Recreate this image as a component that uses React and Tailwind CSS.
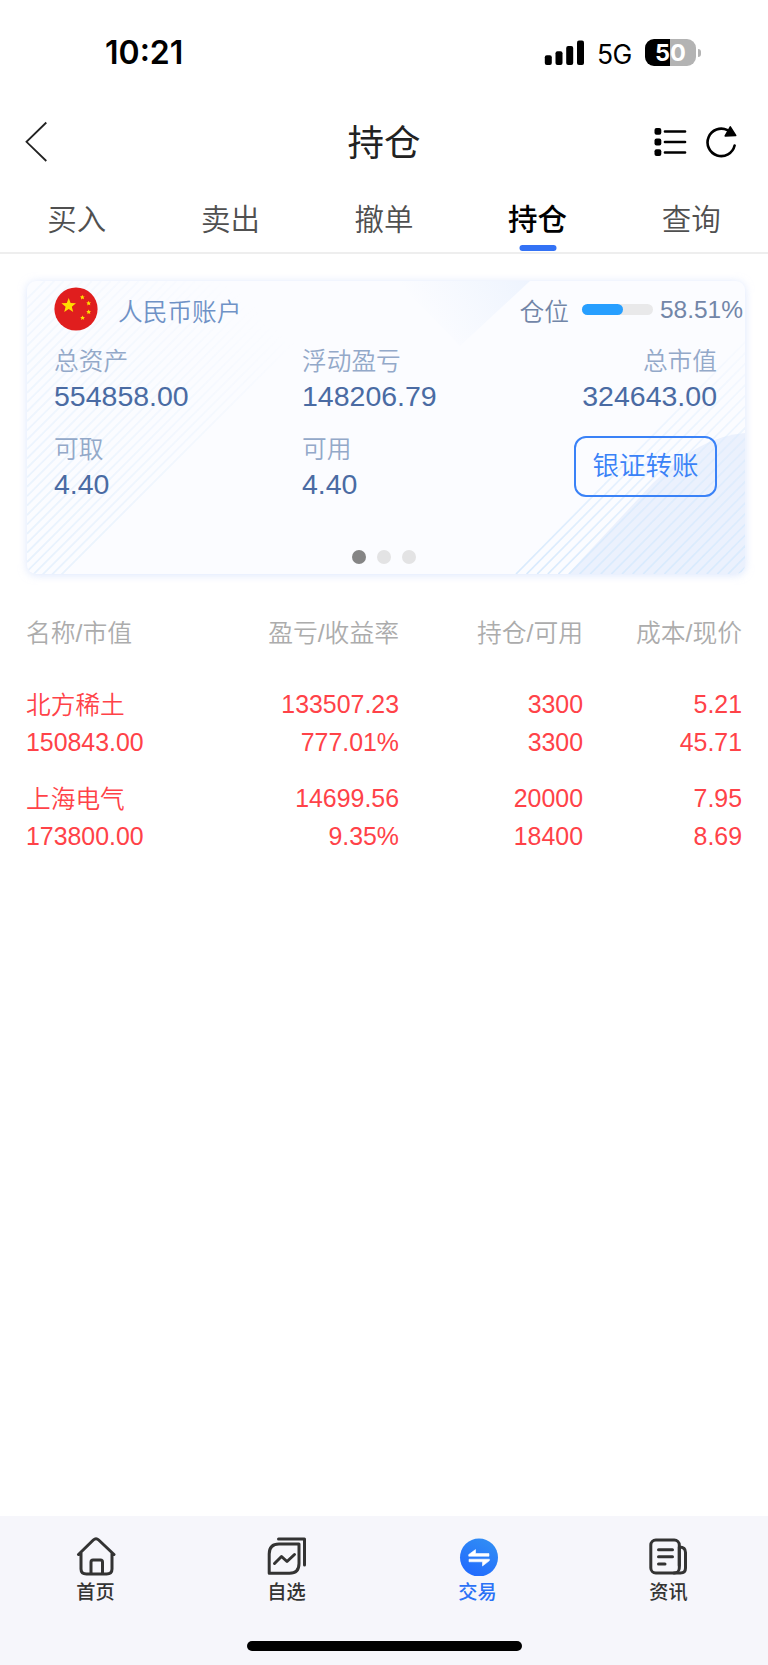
const tabs = ["买入", "卖出", "撤单", "持仓", "查询"];

const headers = ["名称/市值", "盈亏/收益率", "持仓/可用", "成本/现价"];

const positions = [
  {
    name: "北方稀土",
    value: "150843.00",
    profit: "133507.23",
    rate: "777.01%",
    held: "3300",
    usable: "3300",
    cost: "5.21",
    price: "45.71",
  },
  {
    name: "上海电气",
    value: "173800.00",
    profit: "14699.56",
    rate: "9.35%",
    held: "20000",
    usable: "18400",
    cost: "7.95",
    price: "8.69",
  },
];

const leftStripes = Array.from({ length: 34 }, (_, i) => 328 - i * 9.4);
const rightStripes = Array.from({ length: 24 }, (_, i) => 489 + i * 10.6);

function StatusBar() {
  return (
    <div className="flex h-[105px] items-center justify-between pl-[105px] pr-[67px]">
      <span className="font-['Inter'] text-[32px] font-semibold">10:21</span>
      <div className="flex items-center">
        <svg className="mr-[13px] h-[26px] w-10" viewBox="0 0 40 26">
          <rect x="0.8" y="15.3" width="7" height="9.7" rx="2" />
          <rect x="11.5" y="11.3" width="7" height="13.7" rx="2" />
          <rect x="22.2" y="6" width="7" height="19" rx="2" />
          <rect x="33" y="0.5" width="7" height="24.5" rx="2" />
        </svg>
        <span className="mt-[3px] w-[48px] font-['Inter'] text-[26.5px] leading-none tracking-[-0.5px]">5G</span>
        <div className="flex h-[27px] w-[51px] items-center justify-center rounded-[9px] bg-linear-to-r from-black from-50% to-[#b3b3b3] to-50% font-['Inter'] text-[23.5px] font-bold leading-none text-white">
          50
        </div>
        <div className="ml-0.5 h-2 w-[3px] rounded-r-full bg-[#b3b3b3]" />
      </div>
    </div>
  );
}

function Header() {
  return (
    <header className="flex h-[75px] items-center justify-between pl-[25px] pr-[30px]">
      <svg className="mb-1 h-[42px] w-[85px]" viewBox="0 0 85 42" fill="none" stroke="#222" strokeWidth="1.8">
        <path d="M21.3 2.5 1.5 21.8 21.3 41" />
      </svg>
      <h1 className="ml-1 mt-1 text-[36.5px] font-normal text-[#222]">持仓</h1>
      <div className="mb-px flex items-center gap-[18px]">
        <svg className="h-[30px] w-[33px]" viewBox="0 0 33 30" fill="none" stroke="#000" strokeWidth="2.7" strokeLinecap="round">
          <g fill="#000" stroke="none">
            <rect x="0.5" y="1" width="6.8" height="6.8" rx="2" />
            <rect x="0.5" y="11.6" width="6.8" height="6.8" rx="2" />
            <rect x="0.5" y="22.2" width="6.8" height="6.8" rx="2" />
          </g>
          <path d="M11 4.5H31M11 15H31M11 25.5H31" />
        </svg>
        <svg className="h-8 w-[33px]" viewBox="0 0 33 32" fill="none" stroke="#000" strokeWidth="2.6" strokeLinecap="round">
          <path d="M22.5 4.2A13.7 13.7 0 1 0 29.600 19.5" />
          <path d="M25.300 0.9 30.700 9.5 20.200 9.9Z" fill="#000" strokeWidth="1.500" strokeLinejoin="round" />
        </svg>
      </div>
    </header>
  );
}

function FlagIcon() {
  return (
    <svg className="mb-1 h-[44px] w-[44px]" viewBox="0 0 44 44" fill="#fd0">
      <circle cx="22" cy="22" r="21.6" fill="#e01e1e" />
      <path d="M14.7 11 16.6 16.1 22 16.3 17.8 19.7 19.2 25 14.7 22 10.2 25 11.6 19.7 7.4 16.3 12.8 16.1Z" />
      <path
        id="small-star"
        d="M28.4 7.8 29.1 9.4 30.7 9.3 29.6 10.6 30 12.2 28.5 11.5 27 12.4 27.2 10.7 26 9.6 27.6 9.3Z"
      />
      <use href="#small-star" x="6.3" y="6" />
      <use href="#small-star" x="6.3" y="14.7" />
      <use href="#small-star" x="0.2" y="20.6" />
    </svg>
  );
}

function CardBackground() {
  return (
    <svg className="absolute inset-0 h-full w-full" viewBox="0 0 718 293">
      <defs>
        <linearGradient id="wedge" x1="1" y1="0" x2="0.1" y2="0.3">
          <stop offset="0" stopColor="#eef4fe" />
          <stop offset="1" stopColor="#fbfcff" />
        </linearGradient>
        <linearGradient id="left-fade" x1="0" y1="1" x2="0.8" y2="0.1">
          <stop offset="0" stopColor="#fff" />
          <stop offset="1" stopColor="#000" />
        </linearGradient>
        <linearGradient id="right-fade" x1="0" y1="1" x2="0" y2="0">
          <stop offset="0" stopColor="#fff" />
          <stop offset="1" stopColor="#000" />
        </linearGradient>
        <mask id="left-mask" maskUnits="userSpaceOnUse" x="0" y="0" width="290" height="293">
          <rect width="290" height="293" fill="url(#left-fade)" />
        </mask>
        <mask id="right-mask" maskUnits="userSpaceOnUse" x="480" y="40" width="238" height="253">
          <rect x="480" y="40" width="238" height="253" fill="url(#right-fade)" />
        </mask>
      </defs>
      <path d="M370 0H503L433 65Z" fill="url(#wedge)" />
      <path d="M541 293 625 203Q672 155 718 152V293Z" fill="#ebf1fd" />
      <g stroke="#e6f1fd" strokeWidth="1.8" mask="url(#left-mask)">
        {leftStripes.map((c) => (
          <path key={c} d={`M0 ${c} L${c} 0`} />
        ))}
      </g>
      <g stroke="#d8eafd" strokeWidth="1.7" mask="url(#right-mask)">
        {rightStripes.map((x) => (
          <path key={x} d={`M${x} 293 l250 -253`} />
        ))}
      </g>
    </svg>
  );
}

function Field({ label, value, right }) {
  return (
    <div className={right ? "text-right" : ""}>
      <div className="pt-[3px] text-[24.7px] font-[350] leading-[36px] text-[#93a9c9]">{label}</div>
      <div className="-mt-px pb-px text-[28.5px] leading-[35px] text-[#4a6ba3]">{value}</div>
    </div>
  );
}

function AccountCard() {
  return (
    <section className="relative ml-[27px] mr-[23px] mt-[27px] h-[293px] overflow-hidden rounded-[9px] bg-[#fbfcff] shadow-[0_1px_9px_rgba(195,212,250,0.6)]">
      <CardBackground />
      <div className="relative">
        <div className="flex h-[60px] items-center pl-[27px] pr-0.5">
          <FlagIcon />
          <span className="ml-[20px] mt-1 text-[24.7px] font-[350] text-[#6f92c6]">人民币账户</span>
          <span className="ml-auto mt-1 text-[24.7px] font-[350] text-[#7286a8]">仓位</span>
          <div className="mb-[3px] ml-[13px] h-[11px] w-[71px] rounded-full bg-[#e9e9ea]">
            <div className="h-full rounded-full bg-[#279fff]" style={{ width: "58.51%" }} />
          </div>
          <span className="mb-px ml-[7px] text-[24.5px] text-[#7286a8]">58.51%</span>
        </div>
        <div className="grid grid-cols-[248px_1fr_auto] gap-y-3.5 pl-[27px] pr-[28px]">
          <Field label="总资产" value="554858.00" />
          <Field label="浮动盈亏" value="148206.79" />
          <Field label="总市值" value="324643.00" right />
          <Field label="可取" value="4.40" />
          <Field label="可用" value="4.40" />
          <button className="mt-[7px] h-[61px] w-[143px] rounded-xl border-2 border-[#3a82f7] text-[26.5px] font-[350] text-[#3a82f7]">
            银证转账
          </button>
        </div>
      </div>
      <div className="absolute bottom-[10px] left-[325px] flex gap-[11px]">
        <i className="size-[14px] rounded-full bg-[#858585]" />
        <i className="size-[14px] rounded-full bg-[#e3e3e4]" />
        <i className="size-[14px] rounded-full bg-[#e3e3e4]" />
      </div>
    </section>
  );
}

function PositionTable() {
  return (
    <section className="grid grid-cols-[143px_230px_184px_159px] px-[26px] pt-[41px] text-[24.9px]">
      {headers.map((header, i) => (
        <div
          key={header}
          className={`h-[71px] whitespace-nowrap text-[24.8px] font-[350] leading-[37px] text-[#acacac] ${i ? "text-right" : ""}`}
        >
          {header}
        </div>
      ))}
      {positions.map((row) => (
        <div key={row.name} className="col-span-4 grid h-[94px] grid-cols-subgrid text-right leading-[37.5px] text-[#ff4248]">
          <div className="text-left">
            <div className="h-[37.5px] pt-px text-[24.7px] font-[350]">{row.name}</div>
            <div>{row.value}</div>
          </div>
          <div>
            <div>{row.profit}</div>
            <div>{row.rate}</div>
          </div>
          <div>
            <div>{row.held}</div>
            <div>{row.usable}</div>
          </div>
          <div>
            <div>{row.cost}</div>
            <div>{row.price}</div>
          </div>
        </div>
      ))}
    </section>
  );
}

function NavItem({ label, active, children }) {
  return (
    <div className={`flex flex-col items-center pt-5 ${active ? "text-[#2b72f6]" : "text-[#333]"}`}>
      <svg className="size-10" viewBox="0 0 40 40" fill="none" stroke="currentColor" strokeWidth="3" strokeLinecap="round" strokeLinejoin="round">
        {children}
      </svg>
      <span className="mt-[3px] text-[19.2px] font-medium leading-7">{label}</span>
    </div>
  );
}

function BottomNav() {
  return (
    <nav className="mt-auto h-[149px] bg-[#f6f6fb]">
      <div className="grid h-[125px] grid-cols-4 pr-1">
        <NavItem label="首页">
          <path d="M2.5 18.5 17.3 4Q20 1.5 22.7 4L38 18.5M5 17V33Q5 38 10.5 38H30.5Q36 38 36 33V17" />
          <path d="M15 37.5V26Q15 24 17 24H24.5Q26.5 24 26.5 26V37.5" />
        </NavItem>
        <NavItem label="自选">
          <path d="M2.2 37.3V18Q2.2 8 12 8H32V27.5Q32 37.3 22.5 37.3Z" />
          <path d="M11.5 3H37.5V29M7.5 27.5 14.5 20.5 20 25.5 27.5 18.5" />
        </NavItem>
        <NavItem label="交易" active>
          <defs>
            <linearGradient id="trade" x1="0" y1="1" x2="0.5" y2="0">
              <stop offset="0" stopColor="#1f66ff" />
              <stop offset="1" stopColor="#2f8af5" />
            </linearGradient>
          </defs>
          <circle cx="21" cy="21.5" r="19" fill="url(#trade)" stroke="none" />
          <path
            d="M11 20.2H31V17.6H17.5V13.6L10.800 18.5ZM31.200 23.2H11V25.8H24.5V30L31.200 24.8Z"
            fill="#fff"
            stroke="#fff"
            strokeWidth="0.6"
          />
        </NavItem>
        <NavItem label="资讯">
          <rect x="1.8" y="4" width="28.5" height="33" rx="5" />
          <path d="M30.3 11Q36.5 11 36.5 16.5V32Q36.5 37 31.5 37H25M30.3 11V29.5M9.5 13.8H23.5M9.5 20.8H23.5M9.5 28H16" />
        </NavItem>
      </div>
      <div className="mx-auto h-[9.5px] w-[275px] rounded-full bg-black" />
    </nav>
  );
}

export default function App() {
  return (
    <div className="flex h-[1665px] w-[768px] flex-col overflow-hidden bg-white font-['Liberation_Sans','Noto_Sans_CJK_SC',sans-serif] text-black">
      <StatusBar />
      <Header />
      <div className="flex h-[74px] border-b-2 border-[#eee]">
        {tabs.map((tab) => (
          <div
            key={tab}
            className={`relative flex-1 text-center text-[29.5px] leading-[80px] ${tab === "持仓" ? "font-medium text-black" : "font-[350] text-[#505050]"}`}
          >
            {tab}
            {tab === "持仓" && (
              <span className="absolute bottom-px left-1/2 h-[6px] w-[37px] -translate-x-1/2 rounded-full bg-[#3372f5]" />
            )}
          </div>
        ))}
      </div>
      <AccountCard />
      <PositionTable />
      <BottomNav />
    </div>
  );
}
